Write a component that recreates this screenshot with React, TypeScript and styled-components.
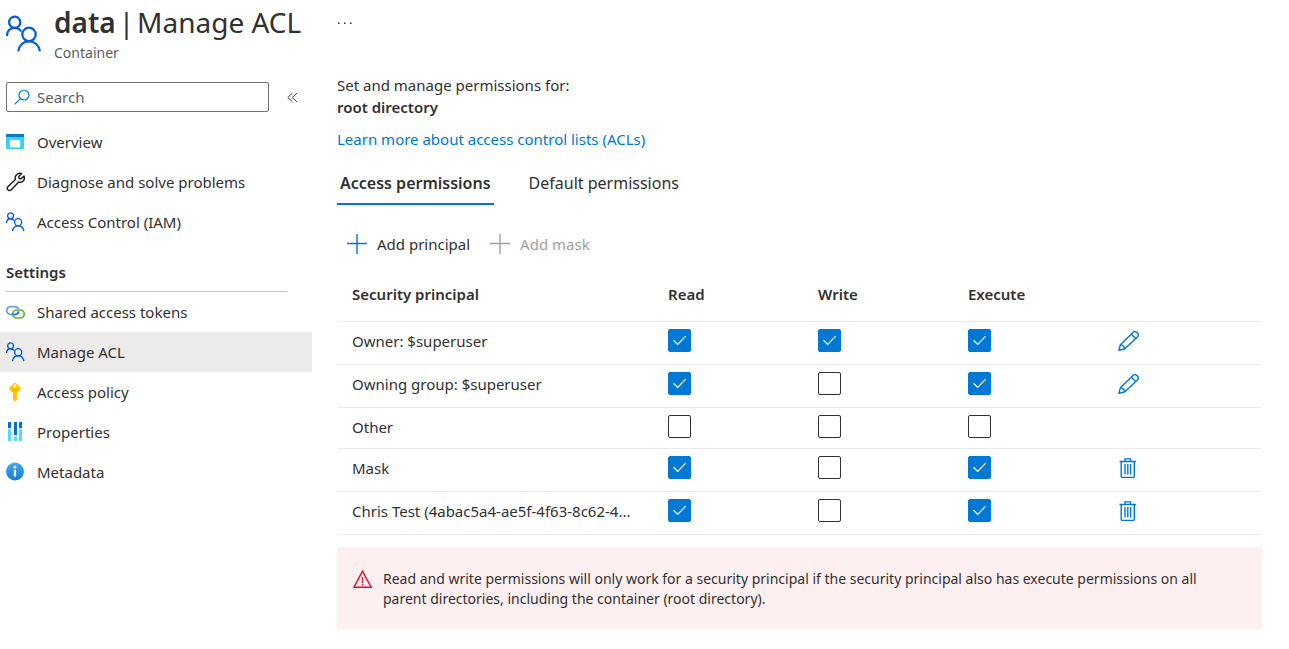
import React, { useState } from "react";
import styled, { createGlobalStyle } from "styled-components";

const GlobalStyle = createGlobalStyle`
  *, *::before, *::after { box-sizing: border-box; }
  body {
    margin: 0;
    background: #fff;
    color: #323130;
    font-family: "Segoe UI", "Noto Sans", "Open Sans", sans-serif;
    font-size: 15px;
    line-height: 22px;
  }
  button, input { font: inherit; color: inherit; }
  button { border: 0; padding: 0; background: none; cursor: pointer; }
  svg { display: block; flex: none; }
`;

const Page = styled.div`
  display: grid;
  grid-template-columns: 312px minmax(0, 1fr);
  column-gap: 25px;
`;

const BladeHeader = styled.header`
  display: flex;
  gap: 12px;
  height: 72px;
  padding-left: 6px;
`;

const BladeIcon = styled.span`
  padding-top: 15px;
`;

const Title = styled.h1`
  display: flex;
  gap: 3px;
  margin: 0;
  font-size: 28px;
  line-height: 44px;
  font-weight: 400;
  white-space: nowrap;

  strong { font-weight: 600; }
`;

const Subtitle = styled.p`
  margin: 0;
  font-size: 14px;
  line-height: 18px;
  color: #605e5c;
`;

const MoreButton = styled.button`
  align-self: start;
  justify-self: start;
  padding: 16px 0;
`;

const SearchRow = styled.div`
  display: flex;
  align-items: center;
  gap: 18px;
  padding: 10px 0 10px 6px;
`;

const SearchBox = styled.label`
  display: flex;
  align-items: center;
  gap: 7px;
  width: 263px;
  height: 30px;
  padding: 0 7px;
  border: 1px solid #74726f;
  border-radius: 2px;
`;

const SearchInput = styled.input`
  flex: 1;
  min-width: 0;
  padding: 0;
  border: 0;
  outline: 0;
  background: none;

  &::placeholder { color: #605e5c; opacity: 1; }
`;

const NavList = styled.ul`
  margin: 0;
  padding: 0;
  list-style: none;
`;

const NavLink = styled.a<{ $active?: boolean }>`
  display: flex;
  align-items: center;
  gap: 12px;
  height: 40px;
  padding-left: 6px;
  background: ${(p) => (p.$active ? "#edebe9" : "transparent")};
  color: #323130;
  text-decoration: none;
`;

const NavHeading = styled.h2`
  margin: 0 25px 0 6px;
  padding: 19px 0 8px;
  border-bottom: 1px solid #c8c6c4;
  font-size: 15px;
  line-height: 22px;
  font-weight: 600;
`;

const Content = styled.main`
  padding: 2px 27px 20px 0;
`;

const Intro = styled.p`
  margin: 0 0 10px;

  strong { display: block; font-weight: 600; }
`;

const LearnLink = styled.a`
  color: #0078d4;
  text-decoration: none;
`;

const TabList = styled.div`
  display: flex;
  gap: 32px;
  margin-top: 15px;
`;

const Tab = styled.button<{ $selected?: boolean }>`
  height: 40px;
  padding: 0 3px 2px;
  border-bottom: 2px solid ${(p) => (p.$selected ? "#0078d4" : "transparent")};
  font-size: 16px;
  font-weight: ${(p) => (p.$selected ? 600 : 400)};
`;

const CommandBar = styled.div`
  display: flex;
  gap: 20px;
  padding: 28px 10px 0;
`;

const Command = styled.button`
  display: flex;
  align-items: center;
  gap: 10px;
  color: #323130;

  svg { color: #0078d4; }
  &:disabled, &:disabled svg { color: #a19f9d; cursor: default; }
`;

const PermissionTable = styled.table`
  width: 100%;
  margin-top: 17px;
  border-spacing: 0;
  table-layout: fixed;

  th, td {
    padding: 7px 0 7px 15px;
    border-bottom: 1px solid #edebe9;
    text-align: left;
    vertical-align: top;
    line-height: 26px;
  }
  thead th, thead td { padding-top: 9px; padding-bottom: 14px; font-weight: 600; }
  tbody th { padding-top: 6px; padding-bottom: 8px; font-weight: 400; white-space: nowrap; }
`;

const PrincipalColumn = styled.col``;
const FlagColumn = styled.col`
  width: 150px;
`;
const ActionColumn = styled.col`
  width: 159px;
`;

const CheckWrap = styled.label`
  display: grid;
  width: 23px;
  height: 23px;

  > * { grid-area: 1 / 1; }
  svg { pointer-events: none; }
`;

const CheckInput = styled.input`
  appearance: none;
  width: 23px;
  height: 23px;
  margin: 0;
  border: 1px solid #323130;
  border-radius: 2px;

  &:checked { background: #0078d4; border-color: #0078d4; }
`;

const RowAction = styled.button`
  display: block;
  height: 28px;
  padding: 2px 0 6px;
  color: #0078d4;
`;

const Notice = styled.div`
  display: flex;
  gap: 10px;
  margin-top: 12px;
  padding: 22px 50px 20px 16px;
  background: #feeff0;
  font-size: 14px;
  line-height: 20px;

  p { margin: 0; }
`;

const PeopleIcon = ({ width, height, stroke }: { width: number; height: number; stroke: number }) => (
  <svg width={width} height={height} viewBox="0 0 36 38" fill="none" stroke="#015cda" strokeWidth={stroke}>
    <circle cx="8.7" cy="7.3" r="5.6" />
    <path d="M1 21c0-4.800 3-8.200 7.700-8.200 2.800 0 5.200 1.400 6.500 3.700" />
    <circle cx="23" cy="19.400" r="6.700" />
    <path d="M12.300 36.300c.8-6 5-10 10.700-10s10.100 4 10.900 10" />
  </svg>
);

const SmallPeople = () => <PeopleIcon width={19} height={20} stroke={2.6} />;

const OverviewIcon = () => (
  <svg width="19" height="20" viewBox="0 0 19 20">
    <rect x="0" y="2" width="18" height="15" rx="1" fill="#32d4f5" />
    <path d="M0 5V3a1 1 0 0 1 1-1h16a1 1 0 0 1 1 1v2z" fill="#0078d4" />
    <path d="M4 7.200h3.500l.8 1H14v7H4z" fill="#fff" stroke="#f7d7b4" strokeWidth=".6" />
    <path d="M4 7h3.600l.8 1.200H4z" fill="#ef9d4e" />
  </svg>
);

const WrenchIcon = () => (
  <svg width="19" height="20" viewBox="0 0 19 20" fill="none" stroke="#1b1a19" strokeWidth="1.400" strokeLinejoin="round">
    <path d="M15.700 1.600 12.800 4.500l.3 2 2 .3 2.900-2.900c.8 2.200.3 4.100-1.100 5.300-1.200 1-2.800 1.200-4.200.8l-7.400 7.700a2.300 2.300 0 0 1-3.800-.5c-.5-1-.2-2 .6-2.800l7.300-6.900c-.6-1.700-.2-3.400 1-4.600 1.400-1.400 3.400-1.900 5.300-1.300z" />
  </svg>
);

const LinkIcon = () => (
  <svg width="19" height="20" viewBox="0 0 19 20" fill="none" strokeWidth="1.700">
    <rect x="6.800" y="8" width="11.400" height="8" rx="4" stroke="#6bb12f" />
    <path d="M12.600 8.600c0 2.400-1.600 3.900-4 3.900H4.800a4 4 0 0 1-4-4 3.900 3.900 0 0 1 4-3.900h3.800c1.800 0 3.200.9 3.800 2.400" stroke="#5ea0ef" />
    <path d="M5.500 12.500h3.300c2 0 3.300-1 3.700-2.700" stroke="#1a7fe0" />
  </svg>
);

const KeyIcon = () => (
  <svg width="19" height="20" viewBox="0 0 19 20">
    <path d="M9 .8c.5 0 .9.200 1.300.6l4.100 4.100c.7.700.7 1.600 0 2.300L11.200 11v7L9 19.400 6.900 18v-7L3.600 7.800c-.7-.7-.7-1.600 0-2.300l4.100-4.100c.4-.4.800-.6 1.300-.6z" fill="#ffca00" />
    <circle cx="9" cy="3.700" r="1.300" fill="#fff" />
    <path d="M6 7.600h6M6 9.200h6M8 12v5" stroke="#f8aa14" strokeWidth=".8" />
  </svg>
);

const PropertiesIcon = () => (
  <svg width="19" height="20" viewBox="0 0 19 20">
    <path d="M2 7h3v12H2zM13 7h3v12h-3z" fill="#50dcfa" />
    <path d="M2 0h3v6H2zM13 0h3v6h-3zM8 0h3v13H8z" fill="#0072cc" />
    <path d="M8 15h3v4H8z" fill="#50dcfa" />
    <path d="M2 6h3v1.500H2zM13 6h3v1.500h-3zM8 13.500h3V15H8z" fill="#c8dfef" />
  </svg>
);

const InfoIcon = () => (
  <svg width="19" height="20" viewBox="0 0 19 20">
    <defs>
      <linearGradient id="info-fill" x1="0" y1="0" x2="0" y2="1">
        <stop offset="0" stopColor="#4aa7ee" />
        <stop offset="1" stopColor="#0f7ed6" />
      </linearGradient>
    </defs>
    <circle cx="9" cy="9.500" r="9" fill="url(#info-fill)" />
    <circle cx="9" cy="5.200" r="1.300" fill="#fff" />
    <path d="M7.900 7.800h2.200v6.800H7.900z" fill="#fff" />
  </svg>
);

const SearchIcon = () => (
  <svg width="16" height="16" viewBox="0 0 16 16" fill="none" stroke="#0078d4" strokeWidth="1.200">
    <circle cx="10" cy="6" r="5" />
    <path d="M6.400 9.600.6 15.400" />
  </svg>
);

const CollapseIcon = () => (
  <svg width="11" height="12" viewBox="0 0 11 12" fill="none" stroke="#484644" strokeWidth="1">
    <path d="M5.500 2 .8 6.500l4.700 4.500M10 2 5.300 6.500 10 11" />
  </svg>
);

const MoreIcon = () => (
  <svg width="16" height="14" viewBox="0 0 16 14" fill="#323130">
    <path d="M1 6.500h1.500V8H1zM7 6.500h1.500V8H7zM13 6.500h1.500V8H13z" />
  </svg>
);

const PlusIcon = () => (
  <svg width="20" height="20" viewBox="0 0 20 20" fill="none" stroke="currentColor" strokeWidth="1.400">
    <path d="M10 0v20M0 9.500h20" />
  </svg>
);

const CheckIcon = () => (
  <svg width="23" height="23" viewBox="0 0 23 23" fill="none" stroke="#fff" strokeWidth="1.200">
    <path d="M5.500 11.300 9.700 15.400 17.700 7.200" />
  </svg>
);

const PencilIcon = () => (
  <svg width="21" height="20" viewBox="0 0 21 20" fill="none" stroke="currentColor" strokeWidth="1.400" strokeLinejoin="round">
    <path d="M.9 19.300 2.300 13.800 14.700 1.700a3.200 3.200 0 0 1 4.500 0 3.200 3.200 0 0 1 0 4.500L6.500 18z" />
    <path d="M13.300 3.200 17.700 7.600M2.300 13.800c2.400.2 4 1.800 4.200 4.200" />
  </svg>
);

const TrashIcon = () => (
  <svg width="20" height="20" viewBox="0 0 20 20" fill="none" stroke="currentColor" strokeWidth="1.400">
    <path d="M1.500 3.500h16.500M7 3.300V.9h5.500v2.400M3.200 3.500v14.800c0 .7.400 1.100 1.100 1.100h10.900c.7 0 1.100-.4 1.100-1.100V3.500" />
    <path d="M7 6v10.500M9.800 6v10.500M12.600 6v10.500" />
  </svg>
);

const WarningIcon = () => (
  <svg width="20" height="20" viewBox="0 0 20 20" fill="none" stroke="#e81123" strokeWidth="1.400">
    <path d="M9.500 2.200.9 18.300h17.300z" />
    <path d="M9.500 8v6M9.500 15.300v1.400" strokeWidth="1.200" />
  </svg>
);

type NavItem = { label: string; icon: React.ReactNode; active?: boolean };

const generalItems: NavItem[] = [
  { label: "Overview", icon: <OverviewIcon /> },
  { label: "Diagnose and solve problems", icon: <WrenchIcon /> },
  { label: "Access Control (IAM)", icon: <SmallPeople /> },
];

const settingsItems: NavItem[] = [
  { label: "Shared access tokens", icon: <LinkIcon /> },
  { label: "Manage ACL", icon: <SmallPeople />, active: true },
  { label: "Access policy", icon: <KeyIcon /> },
  { label: "Properties", icon: <PropertiesIcon /> },
  { label: "Metadata", icon: <InfoIcon /> },
];

const flags = ["Read", "Write", "Execute"];

type Principal = { name: string; access: boolean[]; action?: "edit" | "delete" };

const principals: Principal[] = [
  { name: "Owner: $superuser", access: [true, true, true], action: "edit" },
  { name: "Owning group: $superuser", access: [true, false, true], action: "edit" },
  { name: "Other", access: [false, false, false] },
  { name: "Mask", access: [true, false, true], action: "delete" },
  { name: "Chris Test (4abac5a4-ae5f-4f63-8c62-4...", access: [true, false, true], action: "delete" },
];

const NavGroup = ({ items }: { items: NavItem[] }) => (
  <NavList>
    {items.map((item) => (
      <li key={item.label}>
        <NavLink href="#" $active={item.active} aria-current={item.active ? "page" : undefined}>
          {item.icon}
          {item.label}
        </NavLink>
      </li>
    ))}
  </NavList>
);

const PermissionCheck = ({ label, initial }: { label: string; initial: boolean }) => {
  const [checked, setChecked] = useState(initial);
  return (
    <CheckWrap>
      <CheckInput type="checkbox" aria-label={label} checked={checked} onChange={() => setChecked(!checked)} />
      {checked && <CheckIcon />}
    </CheckWrap>
  );
};

export default function App() {
  return (
    <>
      <GlobalStyle />
      <Page>
        <BladeHeader>
          <BladeIcon>
            <PeopleIcon width={36} height={38} stroke={2.2} />
          </BladeIcon>
          <div>
            <Title>
              <strong>data</strong>
              <span>|</span>
              <span>Manage ACL</span>
            </Title>
            <Subtitle>Container</Subtitle>
          </div>
        </BladeHeader>
        <MoreButton aria-label="More">
          <MoreIcon />
        </MoreButton>

        <nav aria-label="Container">
          <SearchRow>
            <SearchBox>
              <SearchIcon />
              <SearchInput type="text" placeholder="Search" aria-label="Search" />
            </SearchBox>
            <button aria-label="Collapse menu">
              <CollapseIcon />
            </button>
          </SearchRow>
          <NavGroup items={generalItems} />
          <NavHeading>Settings</NavHeading>
          <NavGroup items={settingsItems} />
        </nav>

        <Content>
          <Intro>
            Set and manage permissions for:
            <strong>root directory</strong>
          </Intro>
          <LearnLink href="#">Learn more about access control lists (ACLs)</LearnLink>

          <TabList role="tablist">
            <Tab role="tab" aria-selected="true" $selected>
              Access permissions
            </Tab>
            <Tab role="tab" aria-selected="false">
              Default permissions
            </Tab>
          </TabList>

          <CommandBar>
            <Command>
              <PlusIcon />
              Add principal
            </Command>
            <Command disabled>
              <PlusIcon />
              Add mask
            </Command>
          </CommandBar>

          <PermissionTable>
            <colgroup>
              <PrincipalColumn />
              <FlagColumn />
              <FlagColumn />
              <FlagColumn />
              <ActionColumn />
            </colgroup>
            <thead>
              <tr>
                <th scope="col">Security principal</th>
                {flags.map((flag) => (
                  <th scope="col" key={flag}>
                    {flag}
                  </th>
                ))}
                <td />
              </tr>
            </thead>
            <tbody>
              {principals.map((row) => (
                <tr key={row.name}>
                  <th scope="row">{row.name}</th>
                  {flags.map((flag, i) => (
                    <td key={flag}>
                      <PermissionCheck label={`${flag}, ${row.name}`} initial={row.access[i]} />
                    </td>
                  ))}
                  <td>
                    {row.action && (
                      <RowAction aria-label={`${row.action} ${row.name}`}>
                        {row.action === "edit" ? <PencilIcon /> : <TrashIcon />}
                      </RowAction>
                    )}
                  </td>
                </tr>
              ))}
            </tbody>
          </PermissionTable>

          <Notice role="note">
            <WarningIcon />
            <p>
              Read and write permissions will only work for a security principal if the security principal also has
              execute permissions on all parent directories, including the container (root directory).
            </p>
          </Notice>
        </Content>
      </Page>
    </>
  );
}
